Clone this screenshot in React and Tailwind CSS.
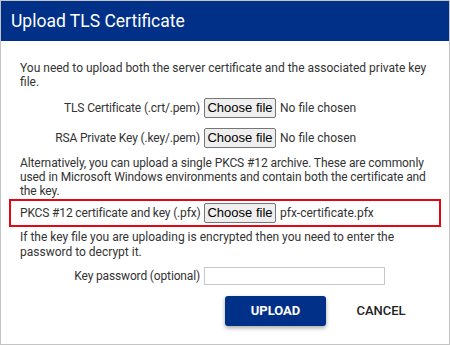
import React from 'react'

function FileField({ label, value }) {
    return (
        <>
            <span className="text-right pr-[4px] whitespace-nowrap tracking-[-0.15px]">{label}</span>
            <div className="flex items-center">
                <span className="h-[20px] w-[72px] flex items-center justify-center border border-[#767676] bg-[#efefef] rounded-[2px] text-[13px] text-black font-['Liberation_Sans',Arial,sans-serif]">
                    Choose file
                </span>
                <span className="ml-[4px] whitespace-nowrap">{value}</span>
            </div>
        </>
    )
}

export default function App() {
    return (
        <div className="w-[450px] h-[345px] border border-[#c4c4c4] bg-white flex flex-col font-['Roboto',sans-serif] text-[#333] text-[12px] leading-[14px]">
            {/* -- Header -- */}
            <div className="h-[40px] shrink-0 bg-[#003087] flex items-center pl-[10px] text-white text-[17.5px]">
                Upload TLS Certificate
            </div>

            {/* -- Body -- */}
            <div className="px-[19px] pt-[20px]">
                <p>You need to upload both the server certificate and the associated private key file.</p>

                <div className="grid grid-cols-[184px_1fr] auto-rows-[30px] items-center mt-[4px]">
                    <FileField label="TLS Certificate (.crt/.pem)" value="No file chosen" />
                    <FileField label="RSA Private Key (.key/.pem)" value="No file chosen" />
                </div>

                <p className="mt-[3px] -mr-[12px] tracking-[-0.1px]">
                    Alternatively, you can upload a single PKCS #12 archive. These are commonly used in Microsoft
                    Windows environments and contain both the certificate and the key.
                </p>

                {/* -- PKCS row (highlighted) -- */}
                <div className="-mx-[11px] mt-[1px] h-[28px] border-2 border-[#e30613] pl-[9px] grid grid-cols-[184px_1fr] items-center">
                    <FileField label="PKCS #12 certificate and key (.pfx)" value="pfx-certificate.pfx" />
                </div>

                <p className="mt-[3px] leading-[15px]">
                    If the key file you are uploading is encrypted then you need to enter the password to decrypt it.
                </p>

                <div className="grid grid-cols-[184px_1fr] h-[30px] items-center mt-[1px]">
                    <span className="text-right pr-[4px] tracking-[-0.15px]">Key password (optional)</span>
                    <input
                        type="password"
                        className="h-[18px] w-[181px] border border-[#c8c8c8] bg-white outline-none"
                    />
                </div>

                {/* -- Actions -- */}
                <div className="flex justify-end gap-[19px] pr-[13px] mt-[5px]">
                    <button className="w-[101px] h-[30px] rounded-[3px] bg-[#003087] text-white font-bold text-[13px] shadow-[0_2px_4px_rgba(0,0,0,0.35)]">
                        UPLOAD
                    </button>
                    <button className="w-[72px] h-[30px] text-[#222] font-medium text-[13px]">CANCEL</button>
                </div>
            </div>
        </div>
    )
}
